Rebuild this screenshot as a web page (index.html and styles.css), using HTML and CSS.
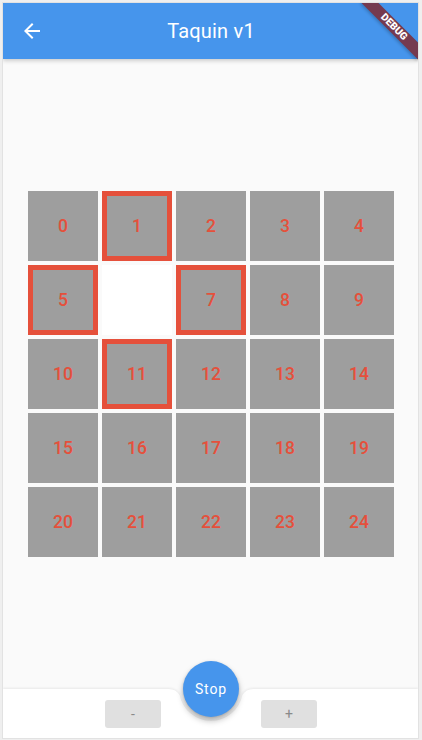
FILE: index.html
```html
<!DOCTYPE html>
<html>
<head>
<meta charset="utf-8">
<link rel="stylesheet" href="styles.css">
</head>
<body>
<div class="device">
  <header class="appbar">
    <button class="back" aria-label="Back">
      <svg viewBox="0 0 24 24" width="24" height="24"><path fill="#fff" d="M20 11H7.83l5.59-5.59L12 4l-8 8 8 8 1.41-1.41L7.83 13H20v-2z"/></svg>
    </button>
    <h1 class="title">Taquin v1</h1>
    <div class="spacer"></div>
  </header>
  <main class="board-area">
    <div class="board">
      <div class="tile">0</div>
      <div class="tile tile-movable">1</div>
      <div class="tile">2</div>
      <div class="tile">3</div>
      <div class="tile">4</div>
      <div class="tile tile-movable">5</div>
      <div class="tile tile-empty"></div>
      <div class="tile tile-movable">7</div>
      <div class="tile">8</div>
      <div class="tile">9</div>
      <div class="tile">10</div>
      <div class="tile tile-movable">11</div>
      <div class="tile">12</div>
      <div class="tile">13</div>
      <div class="tile">14</div>
      <div class="tile">15</div>
      <div class="tile">16</div>
      <div class="tile">17</div>
      <div class="tile">18</div>
      <div class="tile">19</div>
      <div class="tile">20</div>
      <div class="tile">21</div>
      <div class="tile">22</div>
      <div class="tile">23</div>
      <div class="tile">24</div>
    </div>
  </main>
  <footer class="bottombar">
    <svg class="bar-shape" viewBox="0 0 415 49" width="415" height="49" preserveAspectRatio="none">
      <path fill="#fff" d="M0 0H165.5Q173 0 176.6 6A32 32 0 0 0 239.4 6Q243 0 250.5 0H415V49H0Z"/>
    </svg>
    <button class="small-btn">-</button>
    <button class="small-btn">+</button>
  </footer>
  <button class="fab">Stop</button>
  <div class="banner">DEBUG</div>
</div>
</body>
</html>
```
FILE: styles.css
```css
* { box-sizing: border-box; }
html, body { margin: 0; padding: 0; }
body {
  background: #efefef;
  font-family: Roboto, "Noto Sans", sans-serif;
  width: 422px;
  height: 740px;
  overflow: hidden;
}
.device {
  position: relative;
  margin: 3px 4px 2px 3px;
  width: 415px;
  height: 735px;
  background: #fafafa;
  overflow: hidden;
  display: flex;
  flex-direction: column;
  box-shadow: 0 0 0 1px #e2e2e2;
}
.appbar {
  height: 56px;
  flex: none;
  background: #4695ec;
  display: flex;
  align-items: center;
  padding: 0 16px 0 17px;
  box-shadow: 0 2px 4px rgba(0,0,0,0.18);
  position: relative;
  z-index: 2;
}
.back {
  width: 24px;
  height: 24px;
  padding: 0;
  border: 0;
  background: none;
  display: flex;
}
.spacer { width: 24px; }
.title {
  flex: 1;
  margin: 0;
  text-align: center;
  color: #fff;
  font-size: 20px;
  font-weight: 400;
  letter-spacing: 0.2px;
}
.board-area {
  flex: 1;
  display: flex;
  align-items: center;
  justify-content: center;
  padding-left: 1px;
}
.board {
  display: grid;
  grid-template-columns: repeat(5, 70px);
  grid-auto-rows: 70px;
  gap: 4px;
}
.tile {
  background: #9e9e9e;
  color: #e5503b;
  font-size: 17.5px;
  font-weight: 500;
  display: flex;
  align-items: center;
  justify-content: center;
}
.tile-movable { border: 5px solid #e5503b; }
.tile-empty { background: #fff; }
.bottombar {
  position: relative;
  height: 49px;
  flex: none;
  display: flex;
  align-items: center;
  justify-content: center;
  gap: 100px;
  padding-left: 1px;
}
.bar-shape {
  position: absolute;
  left: 0;
  top: 0;
  filter: drop-shadow(0 -1px 1px rgba(0,0,0,0.07));
}
.small-btn {
  position: relative;
  width: 56px;
  height: 28px;
  border: 0;
  border-radius: 3px;
  background: #e0e0e0;
  color: #8a8a8a;
  font-family: Roboto, sans-serif;
  font-size: 14px;
  padding: 0;
  margin-top: 1px;
}
.fab {
  position: absolute;
  left: 180px;
  top: 658px;
  width: 56px;
  height: 56px;
  border-radius: 50%;
  border: 0;
  background: #4695ec;
  color: #fff;
  font-family: Roboto, sans-serif;
  font-size: 14px;
  letter-spacing: 0.9px;
  box-shadow: 0 4px 6px rgba(0,0,0,0.25), 0 1px 3px rgba(0,0,0,0.15);
  z-index: 3;
}
.banner {
  position: absolute;
  top: 18px;
  left: 351px;
  width: 80px;
  height: 12px;
  line-height: 12px;
  transform: rotate(45deg);
  background: #753a4f;
  color: #fff;
  font-size: 10.2px;
  font-weight: 900;
  text-align: center;
  z-index: 5;
  box-shadow: 0 2px 3px rgba(0,0,0,0.2);
}
```
